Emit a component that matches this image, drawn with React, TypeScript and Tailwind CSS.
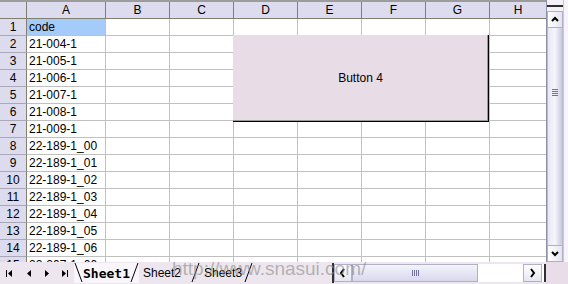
import React from "react";

const cols = [
  { label: "A", w: 79 },
  { label: "B", w: 64 },
  { label: "C", w: 64 },
  { label: "D", w: 64 },
  { label: "E", w: 64 },
  { label: "F", w: 64 },
  { label: "G", w: 64 },
  { label: "H", w: 56 },
];

const codes = [
  "code",
  "21-004-1",
  "21-005-1",
  "21-006-1",
  "21-007-1",
  "21-008-1",
  "21-009-1",
  "22-189-1_00",
  "22-189-1_01",
  "22-189-1_02",
  "22-189-1_03",
  "22-189-1_04",
  "22-189-1_05",
  "22-189-1_06",
  "22-207-1_00",
];

const font = { fontFamily: '"Liberation Sans", Arial, sans-serif' };

const Slant = ({ dir }: { dir: "l" | "r" }) => (
  <svg width="9" height="20" className="shrink-0">
    {dir === "l" ? (
      <line x1="1" y1="0" x2="8" y2="19" stroke="#000" strokeWidth="1" />
    ) : (
      <line x1="1" y1="19" x2="8" y2="0" stroke="#000" strokeWidth="1" />
    )}
  </svg>
);

const NavButtons = () => (
  <svg width="74" height="20" className="shrink-0">
    <rect x="6" y="7" width="1" height="7" fill="#000" />
    <polygon points="12,7 12,14 8,10.5" fill="#000" />
    <polygon points="31,7 31,14 27,10.5" fill="#000" />
    <polygon points="45,7 45,14 49,10.5" fill="#000" />
    <polygon points="62,7 62,14 66,10.5" fill="#000" />
    <rect x="67" y="7" width="1" height="7" fill="#000" />
  </svg>
);

const Chevron = ({ dir }: { dir: "up" | "down" | "left" | "right" }) => {
  const pts = {
    up: "2,6 5,3 8,6",
    down: "2,3 5,6 8,3",
    left: "6,1 3,5 6,9",
    right: "3,1 6,5 3,9",
  }[dir];
  return (
    <svg width="10" height="10">
      <polyline points={pts} fill="none" stroke="#000" strokeWidth="2" />
    </svg>
  );
};

export default function App() {
  return (
    <div
      className="relative w-[568px] h-[284px] overflow-hidden bg-white flex flex-col text-[12px] text-black"
      style={font}
    >
      <div className="flex h-[262px]">
        {/* sheet grid */}
        <div className="w-[546px] flex flex-col">
          <div className="h-[2px] bg-[#9c9c9c] shrink-0" />
          <div className="flex h-[17px] shrink-0 bg-[#dcdcee] border-b border-[#808070]">
            <div className="w-[27px] border-r border-[#808070]" />
            {cols.map((c, i) => (
              <div
                key={c.label}
                className={`flex items-center justify-center leading-none ${i < cols.length - 1 ? "border-r border-[#808070]" : ""}`}
                style={{ width: c.w }}
              >
                {c.label}
              </div>
            ))}
          </div>
          {codes.map((code, r) => (
            <div key={r} className="flex h-[17px] shrink-0">
              <div className="w-[27px] bg-[#dcdcee] border-r border-[#808070] border-b border-b-[#a8a8b8] flex items-center justify-center leading-none">
                {r + 1}
              </div>
              {cols.map((c, i) => (
                <div
                  key={c.label}
                  className={`border-b border-[#c0c0c0] flex items-center leading-none ${i < cols.length - 1 ? "border-r" : ""} ${r === 0 && i === 0 ? "bg-[#a4cbfa]" : ""}`}
                  style={{ width: c.w }}
                >
                  {i === 0 && <span className="pl-[2px] whitespace-nowrap">{code}</span>}
                </div>
              ))}
            </div>
          ))}
        </div>

        {/* vertical scrollbar */}
        <div className="w-[22px] flex">
          <div className="w-[17px] flex flex-col border-l border-[#9090a8]">
            <div className="h-[11px] bg-[#f4f2f8] flex flex-col justify-center">
              <div className="h-[2px] bg-[#303030]" />
            </div>
            <div className="h-[17px] bg-gradient-to-r from-[#ffffff] to-[#e4e4f0] border border-[#b0b0c8] flex items-center justify-center">
              <Chevron dir="up" />
            </div>
            <div className="flex-1 bg-gradient-to-r from-[#e8e8f6] via-[#f6f6fc] to-[#c8c8e0] border-x border-[#b8b8d0] flex flex-col items-center pt-[61px]">
              <div className="w-[6px] flex flex-col gap-[1px]">
                <div className="h-[1px] bg-[#7070a0]" />
                <div className="h-[1px] bg-[#7070a0]" />
                <div className="h-[1px] bg-[#7070a0]" />
                <div className="h-[1px] bg-[#7070a0]" />
              </div>
            </div>
            <div className="h-[17px] bg-gradient-to-r from-[#ffffff] to-[#e4e4f0] border border-[#b0b0c8] flex items-center justify-center">
              <Chevron dir="down" />
            </div>
          </div>
          <div className="flex-1 bg-[#f6f4f8] border-l border-[#c8c8d8]" />
        </div>
      </div>

      {/* bottom bar: sheet tabs + horizontal scrollbar */}
      <div className="flex h-[22px] bg-[#ede6ee]">
        <div className="w-[332px] flex items-center">
          <NavButtons />
          <div className="flex items-center h-[20px] bg-[#f8f6fa]">
            <Slant dir="l" />
            <span
              className="font-bold text-[13px] leading-none"
              style={{ fontFamily: '"DejaVu Sans Mono", monospace' }}
            >
              Sheet1
            </span>
            <Slant dir="r" />
          </div>
          <span className="pl-[4px] pr-[10px] leading-none">Sheet2</span>
          <Slant dir="r" />
          <span className="pl-[4px] pr-[2px] leading-none">Sheet3</span>
          <Slant dir="r" />
        </div>
        <div className="w-[2px] h-[20px] bg-[#303030] mt-[1px]" />
        <div className="w-[212px] h-[18px] mt-[2px] flex bg-white">
          <div className="w-[18px] border border-[#b0b0c8] bg-gradient-to-b from-white to-[#e6e6f2] flex items-center justify-center">
            <Chevron dir="left" />
          </div>
          <div className="w-[126px] border border-[#b0b0c8] bg-gradient-to-b from-[#f4f4fc] to-[#d8d8ec] flex items-center justify-center">
            <div className="flex gap-[1px] h-[6px]">
              <div className="w-[1px] bg-[#7070a0]" />
              <div className="w-[1px] bg-[#7070a0]" />
              <div className="w-[1px] bg-[#7070a0]" />
              <div className="w-[1px] bg-[#7070a0]" />
            </div>
          </div>
          <div className="flex-1" />
          <div className="w-[19px] border border-[#b0b0c8] bg-gradient-to-b from-white to-[#e6e6f2] flex items-center justify-center">
            <Chevron dir="right" />
          </div>
          <div className="w-[2px] bg-[#303030] ml-[2px]" />
        </div>
        <div className="flex-1 bg-[#e8dde8]" />
      </div>

      {/* floating form button */}
      <div className="absolute left-[233px] top-[35px] w-[256px] h-[87px] bg-[#e8dde6] border-r-[1.5px] border-b-[1.5px] border-black shadow-[inset_-1px_-1px_0_#9a9a9a] flex items-center justify-center">
        <span className="text-[12px]">Button 4</span>
      </div>

      {/* watermark */}
      <div className="absolute left-[172px] top-[259px] text-[19px] leading-none text-[#8a8a8a]/60 pointer-events-none whitespace-nowrap">
        http://www.snasui.com/
      </div>
    </div>
  );
}
